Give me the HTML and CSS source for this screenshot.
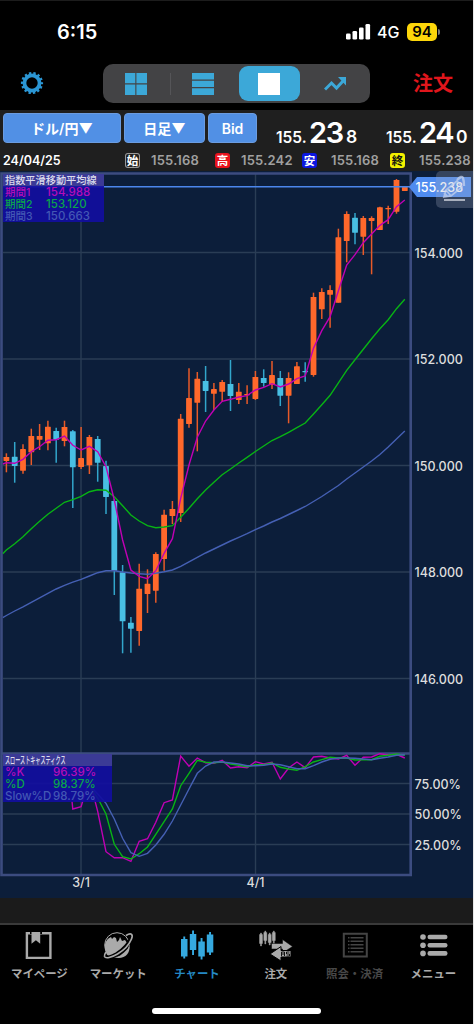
FILE: index.html
```html
<!DOCTYPE html>
<html lang="ja">
<head>
  <meta charset="UTF-8">
  <title>チャート</title>
  <link rel="stylesheet" href="styles.css">
</head>
<body>
  <div class="status">
    <span class="clock">6:15</span>
    <svg class="signal" width="25" height="17" viewBox="0 0 25 17" fill="#fff">
      <rect x="0" y="10.5" width="4.6" height="6" rx="1.3"/>
      <rect x="6.5" y="8" width="4.6" height="8.5" rx="1.3"/>
      <rect x="13" y="4.5" width="4.6" height="12" rx="1.3"/>
      <rect x="19.5" y="1" width="4.6" height="15.5" rx="1.3"/>
    </svg>
    <span class="network">4G</span>
    <span class="battery">94</span>
    <span class="battery-tip"></span>
  </div>

  <div class="toolbar">
    <svg class="gear" width="24" height="24" viewBox="-12 -12 24 24">
      <circle r="7.6" fill="none" stroke="#2b96d4" stroke-width="3.8"/>
      <circle r="9.8" fill="none" stroke="#2b96d4" stroke-width="2.6" stroke-dasharray="2.3 2.098" stroke-dashoffset="1.15"/>
    </svg>
    <div class="segments">
      <div class="segment first">
        <svg width="22" height="22" fill="#3ca8d8"><path d="M0 0h10.3v10.3H0zM11.4 0H22v10.3H11.4zM0 11.4h10.3V22H0zM11.4 11.4H22V22H11.4z"/></svg>
      </div>
      <div class="segment divided">
        <svg width="22" height="22" fill="#3ca8d8"><path d="M0 0h22v6.5H0zM0 7.8h22v6.2H0zM0 15.3h22V22H0z"/></svg>
      </div>
      <div class="segment active">
        <svg width="22" height="22" fill="#fff"><path d="M0 0h22v22H0z"/></svg>
      </div>
      <div class="segment">
        <svg width="23" height="22" viewBox="0 0 23 22"><path d="M1 16.5L7.5 10l5 5L20 7" fill="none" stroke="#3ca8d8" stroke-width="3"/><path d="M14 4h8v8.5z" fill="#3ca8d8"/></svg>
      </div>
    </div>
    <span class="order">注文</span>
  </div>

  <div class="quote">
    <div class="prices">
      <div class="btn pair">ドル/円▼</div>
      <div class="btn span">日足▼</div>
      <div class="btn side">Bid</div>
      <div class="price bid"><span>155.</span><b>23</b><i>8</i></div>
      <div class="price ask"><span>155.</span><b>24</b><i>0</i></div>
    </div>
    <div class="ohlc">
      <span class="date">24/04/25</span>
      <span class="tag open">始</span><span class="value">155.168</span>
      <span class="tag high">高</span><span class="value">155.242</span>
      <span class="tag low">安</span><span class="value">155.168</span>
      <span class="tag close">終</span><span class="value">155.238</span>
    </div>
  </div>

  <div class="chart">
    <svg id="chart" width="473" height="727" viewBox="0 171 473 727"></svg>
    <div class="legend main">
      <h2>指数平滑移動平均線</h2>
      <p class="fast"><span>期間1</span>154.988</p>
      <p class="mid"><span>期間2</span>153.120</p>
      <p class="slow"><span>期間3</span>150.663</p>
    </div>
    <div class="legend sub">
      <h2><span>スローストキャスティクス</span></h2>
      <p class="fast"><span>%K</span>96.39%</p>
      <p class="mid"><span>%D</span>98.37%</p>
      <p class="slow"><span>Slow%D</span>98.79%</p>
    </div>
    <div class="draw">
      <svg width="37" height="37" viewBox="0 0 37 37" fill="none" stroke="#c9d6f0" stroke-opacity=".7">
        <path d="M8 26l2-7 11-9 5 6-11 9z M10 19l5 6 M8 22l3 3" stroke-width="1.8"/>
        <path d="M21 9q5-5 6-2t1 8" stroke-width="2.4"/>
        <path d="M8 29h21" stroke="#a9b0bd" stroke-opacity="1" stroke-width="2"/>
      </svg>
    </div>
  </div>

  <div class="tabs">
    <div class="tab">
      <svg width="36" height="32" viewBox="0 0 36 32"><path d="M5.9 3.3h23.5v24.6H5.9z" fill="none" stroke="#aaa" stroke-width="2.4"/><path d="M9 1h12v3H9z" fill="#000"/><path d="M10.5 2h8.7v11.8l-4.300-3.600-4.400 3.600z" fill="#aaa"/></svg>
      マイページ
    </div>
    <div class="tab">
      <svg width="36" height="32" viewBox="0 0 36 32">
        <circle cx="17" cy="15" r="12.3" fill="none" stroke="#aaa" stroke-width="1"/>
        <path d="M5 20C4 14 6 9 11 7l1 2 2-2 2 1 1 4 2-2 1-3 2 4 3-1 2 3c-3 5-10 11-17 13-3 0-4-3-5-6z" fill="#aaa"/>
        <path d="M27 4.5c4-1.500 5.500-.5 4 4-2.500 6-8 11.500-14 15.500-6 3.500-11 4.500-12 3" fill="none" stroke="#000" stroke-width="4"/>
        <path d="M26 5.500c5-3 7.500-1.500 5.500 3.500-2.500 6-8 11.500-14 15-6 3.500-12 5-13 2.500-.5-1.500.5-3 1.500-4.500" fill="none" stroke="#aaa" stroke-width="1.7"/>
        <path d="M16 27.800c6-2.500 10-7 13.500-11.300.5 6.500-4 12.500-13.500 11.300z" fill="#aaa"/>
      </svg>
      マーケット
    </div>
    <div class="tab active">
      <svg width="36" height="32" viewBox="0 0 36 32" fill="#35a9df"><path d="M2 9h6.500v17.500H2zM4.300 6.500h1.900v22H4.300zM10.800 4h6.500v16h-6.500zM13.100.5H15V25h-1.900zM19.300 11.500h6.500v15h-6.500zM21.600 8h1.900v21.500h-1.900zM27.800 4.500h6.500v18h-6.500zM30.100 2H32v23h-1.900z"/></svg>
      チャート
    </div>
    <div class="tab">
      <svg width="36" height="32" viewBox="0 0 36 32" fill="#aaa">
        <path d="M1.500 4.500h3v9h-3zM2.500 3h1v13h-1zM5.800 2.500h3v8h-3zM6.800 1h1v13h-1zM10.200 4.500h3v8h-3zM11.200 3h1v12h-1zM14.300 2.500h3v8h-3zM15.300 1h1v13h-1z" stroke="#aaa" stroke-width=".4"/>
        <path d="M13.500 13.500h11V9.500l10 7-10 6.500v-4h-11z" stroke="#000" stroke-width=".5"/>
        <path d="M33 20.500H23v-4l-11 7.500 11 7v-4h10z" stroke="#000"/>
        <path d="M23.500 26v-4h3v4m-3-2h3M31.500 22h-3v2h3v2h-3" fill="none" stroke="#111" stroke-width="1"/>
      </svg>
      注文
    </div>
    <div class="tab disabled">
      <svg width="36" height="32" viewBox="0 0 36 32" fill="none" stroke="#444"><path d="M6.800 3.800h23v22.600h-23z" stroke-width="2"/><path d="M11 7.800h1.500m1 0h13M11 11.300h1.500m1 0h13M11 14.800h1.500m1 0h13M11 18.300h1.500m1 0h13M11 21.800h1.500m1 0h13" stroke-width="1.6"/></svg>
      照会・決済
    </div>
    <div class="tab">
      <svg width="36" height="32" viewBox="0 0 36 32" fill="#aaa"><circle cx="8" cy="7" r="2.8"/><circle cx="8" cy="15.2" r="2.8"/><circle cx="8" cy="23.4" r="2.8"/><rect x="12.5" y="4.7" width="20" height="4.6" rx="2.2"/><rect x="12.5" y="12.9" width="20" height="4.6" rx="2.2"/><rect x="12.5" y="21.1" width="20" height="4.6" rx="2.2"/></svg>
      メニュー
    </div>
  </div>
  <div class="home"></div>

  <script src="chart.js"></script>
</body>
</html>
```

FILE: styles.css
```css
* {
  box-sizing: border-box;
}
body {
  margin: 0;
  width: 474px;
  height: 1024px;
  overflow: hidden;
  background: #000;
  border-right: 1px solid #e8e8e8;
  color: #fff;
  font-family: Inter, "Noto Sans CJK JP", sans-serif;
}
.status {
  display: flex;
  align-items: center;
  height: 56px;
  padding: 7px 0 0 57px;
  border-top: 1px solid #1c1c1c;
}
.clock {
  width: 289px;
  font-size: 20px;
  font-weight: 600;
}
.signal {
  margin-top: -1px;
}
.network {
  width: 30px;
  margin-left: 6px;
  font-size: 16px;
  font-weight: 500;
}
.battery {
  width: 30px;
  height: 18px;
  border-radius: 5px;
  background: #fdd60a;
  color: #000;
  font-size: 15px;
  font-weight: 600;
  line-height: 18px;
  text-align: center;
}
.battery-tip {
  width: 2px;
  height: 6px;
  margin-left: 1px;
  border-radius: 0 2px 2px 0;
  background: #777;
}
.toolbar {
  display: flex;
  align-items: center;
  height: 54px;
  padding-left: 20px;
}
.segments {
  display: flex;
  width: 267px;
  height: 39px;
  margin: 1px 0 0 59px;
  padding: 2px;
  border-radius: 10px;
  background: #434345;
}
.segment {
  display: flex;
  flex: 1;
  align-items: center;
  justify-content: center;
}
.segment.first svg {
  margin-right: 4px;
}
.segment.divided {
  background: linear-gradient(#555558, #555558) 0 50% / 1px 22px no-repeat;
}
.segment.active {
  flex: 0 0 61px;
  margin: 0 3px;
  border-radius: 9px;
  background: #3ca8d8;
}
.order {
  margin: -2px 0 0 43px;
  color: #e0161c;
  font-size: 20px;
  font-weight: 700;
}
.quote {
  height: 61px;
  padding: 3px 0 0 3px;
  background: #1f1f1f;
}
.prices {
  display: flex;
  gap: 3px;
  height: 31px;
}
.btn {
  height: 30px;
  border: 1px solid #6b9ce0;
  border-radius: 4px;
  background: #5190e5;
  font-size: 14px;
  font-weight: 600;
  line-height: 30px;
  text-align: center;
}
.pair {
  width: 118px;
}
.span {
  width: 81px;
}
.side {
  width: 49px;
}
.price {
  display: flex;
  align-items: baseline;
  height: 36px;
  font-weight: 600;
  line-height: 39px;
}
.price span {
  width: 33px;
  font-size: 15.5px;
}
.price b {
  width: 37px;
  font-size: 29px;
  font-weight: 600;
  letter-spacing: -1.3px;
}
.price i {
  font-size: 17.5px;
  font-style: normal;
}
.bid {
  width: 107px;
  margin-left: 16px;
}
.ohlc {
  display: flex;
  align-items: center;
  height: 27px;
  padding-top: 5px;
  font-size: 13px;
  font-weight: 600;
  letter-spacing: 0.2px;
}
.ohlc span {
  flex-shrink: 0;
}
.date {
  width: 122px;
  font-size: 12.5px;
  font-weight: 600;
  letter-spacing: 0;
}
.tag {
  width: 15px;
  height: 15px;
  border-radius: 3px;
  font-family: "Noto Sans CJK JP", sans-serif;
  font-size: 11.5px;
  font-weight: 700;
  letter-spacing: 0;
  line-height: 15px;
  text-align: center;
}
.open {
  background: #222;
  box-shadow: inset 0 0 0 1px #999;
}
.high {
  background: #e8121c;
}
.low {
  background: #0b17e0;
}
.close {
  background: #f4f000;
  color: #111;
}
.value {
  width: 75px;
  padding-left: 11px;
  color: #a0a0a0;
}
.high + .value {
  width: 72px;
}
.low + .value,
.close + .value {
  width: 73px;
  padding-left: 14px;
}
.chart {
  position: relative;
  height: 727px;
  background: #0c1e3a;
}
#chart {
  display: block;
}
.axis {
  fill: #ddd;
  font-size: 12.5px;
  font-weight: 500;
}
.legend {
  position: absolute;
  left: 3px;
  background: rgba(18, 14, 160, 0.92);
  font-size: 11.5px;
}
.legend.main {
  top: 3px;
  width: 101px;
  height: 48px;
}
.legend.sub {
  top: 583px;
  width: 109px;
  height: 48px;
}
.legend h2 {
  height: 12px;
  margin: 0;
  padding-left: 2px;
  background: #3b3a96;
  color: #dcdcec;
  font-size: 10.2px;
  font-weight: 500;
  line-height: 12px;
  white-space: nowrap;
}
.legend.sub h2 span {
  display: inline-block;
  font-size: 10px;
  transform: scaleX(0.51);
  transform-origin: 0 50%;
}
.legend p {
  height: 12.2px;
  margin: 0;
  padding-left: 2px;
  font-weight: 500;
  line-height: 13px;
  white-space: nowrap;
}
.legend p span {
  display: inline-block;
  width: 41px;
}
.legend.main p span {
  font-size: 10.5px;
}
.legend.sub p span {
  width: 48px;
}
.fast {
  color: #b40cb8;
}
.mid {
  color: #0aa54a;
}
.slow {
  color: #4358b4;
}
.draw {
  position: absolute;
  top: 0;
  right: 0;
  width: 37px;
  height: 37px;
  border-radius: 5px 0 0 5px;
  background: rgba(160, 170, 190, 0.28);
}
.tabs {
  display: grid;
  grid-template-columns: repeat(6, 78.8px);
  height: 82px;
  margin-top: 25px;
  padding-top: 5px;
  border-top: 2px solid #3a3a3a;
  box-shadow: 0 -25px #1b1b1b;
}
.tab {
  display: flex;
  flex-direction: column;
  align-items: center;
  color: #aaa;
  font-size: 11.4px;
  font-weight: 600;
  line-height: 20px;
}
.tab svg {
  margin-bottom: 2px;
}
.tab.active {
  color: #2488c4;
}
.tab.disabled {
  color: #484848;
}
.home {
  width: 169px;
  height: 6px;
  margin: 3px auto 0 152px;
  border-radius: 3px;
  background: #fff;
}
```

FILE: chart.js
```js
const svg = document.getElementById("chart");
const x0 = 6.4;
const step = 8.3;

// direction, high, body top, body bottom, low
const candles = [
  ["u", 453.3, 457, 461, 472.3], ["d", 442, 456.7, 466, 482.7], ["u", 444.3, 449, 470.7, 473.7],
  ["u", 428.7, 436, 452.3, 465], ["u", 424, 436, 439.7, 450], ["u", 420.7, 426.7, 443.3, 450.3],
  ["d", 427.7, 431, 439.7, 462.7], ["u", 420.7, 427, 441, 446.3], ["d", 430, 431.3, 467.3, 508],
  ["u", 427, 458, 467, 469], ["u", 435, 437, 465.3, 474], ["d", 436, 439, 462.7, 481.7],
  ["d", 460.7, 466, 497, 514], ["d", 499, 501, 570.7, 595], ["d", 565, 572.3, 621.3, 653.3],
  ["d", 617, 622.7, 628.7, 652.7], ["u", 563.7, 588.7, 631, 645.7], ["u", 569.3, 583.7, 594, 613],
  ["u", 552.3, 554, 590.7, 602.7], ["u", 509.7, 514.7, 559, 570.7], ["u", 501, 509, 516, 524],
  ["u", 414, 418.7, 513, 522], ["u", 368.3, 398, 424, 427.7], ["u", 372, 378.7, 402.7, 451.3],
  ["d", 366, 381, 391, 412], ["u", 383, 389, 393.7, 410], ["u", 380, 382, 391.7, 401.7],
  ["d", 360, 384, 396, 411], ["u", 383, 391.7, 400, 404], ["u", 385.3, 394, 395.2, 404],
  ["u", 371, 377, 399, 400], ["d", 369.3, 378, 383, 386.7], ["u", 361, 375, 385, 389],
  ["d", 371, 378, 395.7, 406], ["u", 372.3, 378, 395.7, 423.3], ["u", 362, 366.3, 384, 384],
  ["d", 362.3, 371, 372.2, 381.7], ["u", 292.7, 297, 375, 376.7], ["u", 288.3, 292, 309.3, 319],
  ["u", 285.3, 290, 294.7, 327.7], ["u", 228.7, 237.3, 302.7, 302.7], ["u", 211.3, 214, 241, 262.3],
  ["d", 213, 217.7, 232.7, 244.3], ["u", 216, 218, 236.7, 255], ["u", 216.3, 218, 221, 274.3],
  ["u", 206.7, 207.3, 230, 230], ["u", 205.7, 208, 209.2, 224], ["u", 179, 180, 211.7, 213.7],
  ["u", 187, 187, 191, 191]
];

const ema1 = [462.7, 463.3, 459.3, 451.7, 446.7, 440.3, 439.7, 436, 445.3, 450, 446.3, 451.7, 466.7, 500, 540, 570, 576.3, 578.7, 570.7, 553.3, 538.7, 498.3, 465, 437.3, 421, 410, 401.3, 399.3, 397, 395.7, 390, 387.3, 383.7, 387, 384, 378.7, 376, 348.3, 330.7, 316.7, 290.7, 265, 254.7, 242.7, 234, 225.3, 219.7, 206.7, 200];
const ema2 = [550, 543.7, 536.7, 528.7, 521.3, 514.3, 508.3, 502.3, 499.7, 496.3, 491.7, 489.7, 490.3, 496.7, 505.7, 515, 521, 525.7, 527.7, 527, 525.7, 517.3, 508.3, 498.7, 490, 482.3, 474.7, 469, 463, 457.3, 451.5, 446, 440.5, 436.7, 432.3, 427.7, 423, 414, 404.7, 395.3, 382.9, 370.3, 359.7, 349.3, 338.7, 328.7, 319.7, 308.7, 299.3];
const ema3 = [615.5, 611, 606.8, 602.3, 597.8, 593.3, 589, 585.3, 582.2, 579.3, 576, 572.7, 570.7, 570.7, 572, 573, 573.7, 574.3, 573.3, 571.8, 570, 566.3, 561.8, 557.3, 553, 549, 545, 541, 537.3, 533.7, 529.7, 526, 522, 518.5, 514.5, 510.5, 506.5, 501.5, 496.5, 491, 485.5, 479, 473, 467, 461, 454.5, 447, 439, 431];

const fastK = [806.7, 779, 811.3, 851.7, 857.7, 857.7, 861.3, 841.3, 838.7, 822.3, 802.7, 800, 756, 766.3, 758, 762.7, 763.3, 760.3, 768, 766.7, 767.7, 761.7, 764, 762.3, 779, 768, 762, 767.7, 757, 756.3, 758, 759, 755.3, 765.3, 757.3, 757, 753.7, 755, 754.3, 758];
const slowK = [780, 786, 798, 814, 844.3, 856.7, 859, 853.7, 847, 834.3, 821.7, 809, 785.7, 773.3, 760.3, 762.3, 762.7, 762, 764, 765.3, 766.7, 764.7, 764.7, 763, 767.3, 769, 770.3, 766.7, 762, 759.7, 757.3, 758, 758, 760, 759.7, 759.7, 756.3, 755.3, 754, 755.3];
const slowD = [780, 785, 794, 803.3, 819, 838.3, 852.7, 856.3, 853.3, 845, 834.3, 821, 805, 789, 773.3, 766, 762, 762, 763, 764, 765.7, 765.7, 765.3, 764, 764.7, 766.7, 768.7, 768.7, 765.7, 762, 759.3, 758, 758, 758.3, 759, 759.7, 758.3, 757, 755.3, 754.7];

function el(name, attrs, text) {
  const node = document.createElementNS("http://www.w3.org/2000/svg", name);
  for (const key in attrs) node.setAttribute(key, attrs[key]);
  if (text) node.textContent = text;
  svg.appendChild(node);
}

function path(d, stroke, width) {
  el("path", { d: d, fill: "none", stroke: stroke, "stroke-width": width });
}

function line(values, color, first, lead) {
  const points = values.map((y, i) => `${(x0 + (i + first) * step).toFixed(1)} ${y}`);
  path("M" + (lead || "") + points.join("L"), color, 1.4);
}

// grid
[252.5, 359, 465.5, 572, 678.5, 783.5, 814, 844.5].forEach(y => path(`M3 ${y}H410`, "#2a3d55", 1.4));
[81, 255.5].forEach(x => path(`M${x} 174V875`, "#2a3d55", 1.4));

candles.forEach(([dir, high, top, bottom, low], i) => {
  const x = x0 + i * step;
  const color = dir === "u" ? "#ff682b" : "#48bfe3";
  path(`M${x} ${high}V${low}`, dir === "u" ? "#e85a28" : "#32a6cb", 1.5);
  el("rect", { x: x - 2.9, y: top, width: 5.8, height: bottom - top, rx: 0.4, fill: color });
});

line(ema3, "#4560b4", 0, "2.7 617.7L");
line(ema2, "#08b414", 0, "2.7 553.7L");
line(ema1, "#c000b4", 0, "2.7 464L");

// frames
path("M1.5 173.5H410.7V875H1.5z", "#3c4c80", 2.6);
path("M1.5 753.5H410.7", "#3c4c80", 2.4);

line(fastK, "#c000b4", 9, "72 801L72.8 809L");
line(slowK, "#08b414", 9);
line(slowD, "#4560b4", 9);

// current price
path("M3 186.7H412", "#4b86ec", 1.5);
el("path", { d: "M409 187L417 177H471V197H417z", fill: "#4f8cf0" });
el("text", { x: 415.5, y: 191.8, class: "axis", style: "fill: #fff" }, "155.238");

[[252.5, "154.000"], [359, "152.000"], [465.5, "150.000"], [572, "148.000"], [678.5, "146.000"],
 [783.5, "75.00%"], [814, "50.00%"], [844.5, "25.00%"]].forEach(([y, label]) => {
  el("text", { x: 414.5, y: y + 5, class: "axis" }, label);
});
el("text", { x: 81, y: 886.5, class: "axis", "text-anchor": "middle" }, "3/1");
el("text", { x: 255.5, y: 886.5, class: "axis", "text-anchor": "middle" }, "4/1");
```
